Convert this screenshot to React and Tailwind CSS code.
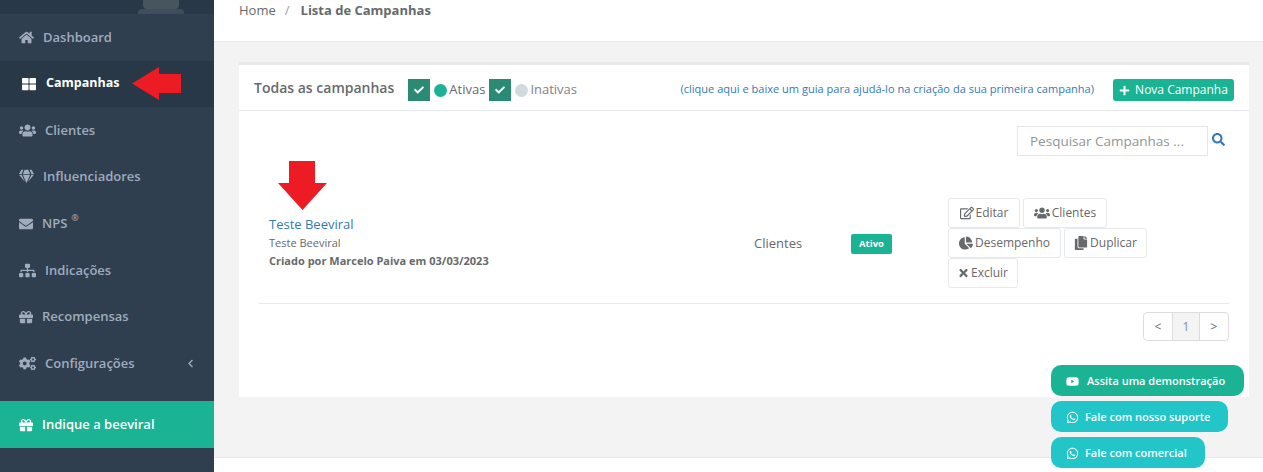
import React from "react";
import {
  FaHome, FaThLarge, FaUsers, FaGem, FaEnvelope, FaSitemap, FaGift, FaCogs, FaChevronLeft,
  FaCheck, FaPlus, FaSearch, FaRegEdit, FaChartPie, FaCopy, FaTimes, FaYoutube, FaWhatsapp,
} from "react-icons/fa";

const navItems = [
  { label: "Dashboard", icon: FaHome, size: "w-[15px] h-[15px]", row: "pt-[1px] gap-[9px]" },
  { label: "Campanhas", icon: FaThLarge, active: true, size: "w-[14px] h-[14px] ml-[3px]", row: "bg-[#293846] text-white font-bold text-[12.5px] gap-[10px]" },
  { label: "Clientes", icon: FaUsers, size: "w-[17px] h-[15px]", row: "pt-[1px] gap-[9px]" },
  { label: "Influenciadores", icon: FaGem, size: "w-[15px] h-[15px]", row: "gap-[9px]" },
  { label: "NPS", icon: FaEnvelope, sup: true, size: "w-[14px] h-[14px]", row: "pt-[1px] gap-[9px]" },
  { label: "Indicações", icon: FaSitemap, size: "w-[17px] h-[15px]", row: "pt-[1px] gap-[9px]" },
  { label: "Recompensas", icon: FaGift, size: "w-[14px] h-[14px]", row: "pt-[1px] gap-[9px]" },
  { label: "Configurações", icon: FaCogs, caret: true, size: "w-[17px] h-[15px]", row: "pt-[1px] gap-[9px]" },
];

function LeftArrow() {
  return (
    <svg viewBox="0 0 49 33" className="w-[49px] h-[33px] ml-[3px] shrink-0" fill="#ed1c24">
      <path d="M0 16.5 27 0v7h22v19H27v7z" />
    </svg>
  );
}

function DownArrow() {
  return (
    <svg viewBox="0 0 49 49" className="absolute left-[19px] -top-[21px] w-[49px] h-[49px]" fill="#ed1c24">
      <path d="M11 0h26v22h12L24.5 49 0 22h11z" />
    </svg>
  );
}

function Sidebar() {
  return (
    <aside className="w-[214px] shrink-0 bg-[#2f3f4f] flex flex-col font-semibold text-[13px] text-[#a0abbd]">
      <div className="h-[14px] bg-[#293846] flex justify-center overflow-hidden pl-[107px]">
        <div className="w-[50px] h-[14px] flex flex-col items-center">
          <div className="w-[36px] h-[9px] bg-[#47555f] rounded-b" />
          <div className="w-[46px] h-[5px] bg-[#3f4e5a] rounded-t" />
        </div>
      </div>
      {navItems.map((item) => {
        const Icon = item.icon;
        return (
          <div key={item.label} className={`h-[46.5px] pl-[19px] pr-[20px] flex items-center ${item.row}`}>
            <Icon className={`${item.size} shrink-0`} />
            <span>{item.label}</span>
            {item.sup && <sup className="text-[9px] -ml-[5px] -mt-[3px]">®</sup>}
            {item.caret && <FaChevronLeft className="ml-auto w-[7px] h-[9px]" />}
            {item.active && <LeftArrow />}
          </div>
        );
      })}
      <div className="mt-[15px] h-[47px] bg-[#1ab394] text-white pl-[19px] flex items-center gap-[9px]">
        <FaGift className="w-[14px] h-[14px]" />
        <span>Indique a beeviral</span>
      </div>
    </aside>
  );
}

function CheckBox() {
  return (
    <span className="w-[22px] h-[22px] bg-[#2b8a74] flex items-center justify-center text-white">
      <FaCheck className="w-[10px] h-[10px]" />
    </span>
  );
}

function ActionButton({ icon: Icon, children, width, iconSize = "w-[14px] h-[14px]" }) {
  return (
    <button className={`h-[30px] ${width} border border-[#e7eaec] rounded-[3px] bg-white flex items-center justify-center gap-[2px] text-[12px] text-[#676a6c]`}>
      <Icon className={iconSize} />
      {children}
    </button>
  );
}

function FloatButton({ icon: Icon, children, color, width, gap }) {
  return (
    <div className={`h-[31px] ${width} ${color} ${gap} rounded-[10px] pl-[15px] pt-[1px] flex items-center text-white text-[11px] font-semibold`}>
      <Icon className="w-[13px] h-[13px]" />
      {children}
    </div>
  );
}

export default function App() {
  return (
    <div className="relative w-[1263px] h-[472px] overflow-hidden flex font-['Open_Sans',sans-serif] text-[#676a6c]">
      <Sidebar />

      <main className="flex-1 flex flex-col bg-[#f3f3f4]">
        <header className="h-[42px] shrink-0 bg-white border-b border-[#e7eaec] pl-[25px] pt-[1px] text-[13px] flex gap-[8px]">
          <span>Home</span>
          <span className="text-[#9a9c9e] ml-[1px]">/</span>
          <span className="font-bold ml-[3px]">Lista de Campanhas</span>
        </header>

        <section className="ml-[25px] mr-[14px] mt-[20px] h-[335px] bg-white border-t-[3px] border-[#e7eaec] flex flex-col">
          <div className="h-[46px] shrink-0 border-b border-[#e7eaec] pl-[15px] pr-[15px] flex items-center">
            <h2 className="text-[14px] font-semibold -mt-[1px]">Todas as campanhas</h2>
            <div className="ml-[14px] flex items-center text-[13px] mt-[5px]">
              <CheckBox />
              <span className="ml-[4px] w-[13px] h-[13px] rounded-full bg-[#1ab394]" />
              <span className="ml-[2px]">Ativas</span>
              <span className="ml-[4px]"><CheckBox /></span>
              <span className="ml-[4px] w-[13px] h-[13px] rounded-full bg-[#d1dade]" />
              <span className="ml-[2px] text-[#7f8285]">Inativas</span>
            </div>
            <a className="ml-auto mt-[4px] text-[11.05px] text-[#337ab7] mr-[19px]">(clique aqui e baixe um guia para ajudá-lo na criação da sua primeira campanha)</a>
            <button className="w-[121px] h-[22px] mt-[5px] rounded-[3px] bg-[#1ab394] text-white text-[12px] font-medium flex items-center justify-center gap-[5px]">
              <FaPlus className="w-[11px] h-[11px]" />
              Nova Campanha
            </button>
          </div>

          <div className="flex justify-end items-start pt-[15px] pr-[24px] gap-[4px]">
            <div className="w-[191px] h-[30px] border border-[#e5e6e7] flex items-center pl-[12px] text-[13.5px] text-[#8f9599]">Pesquisar Campanhas ...</div>
            <FaSearch className="mt-[7px] w-[13px] h-[13px] text-[#337ab7]" />
          </div>

          <div className="relative mx-[20px] mt-[26px] h-[122px] border-b border-[#e7eaec] flex">
            <DownArrow />
            <div className="w-[495px] pl-[10px] pt-[33px]">
              <a className="block text-[13px] text-[#337ab7] leading-[18px]">Teste Beeviral</a>
              <p className="text-[11px] leading-[14px] mt-[3px]">Teste Beeviral</p>
              <p className="text-[11px] leading-[14px] mt-[4px] font-bold">Criado por Marcelo Paiva em 03/03/2023</p>
            </div>
            <div className="w-[97px] pt-[52px] text-[13px] leading-[18px]">Clientes</div>
            <div className="w-[97px] pt-[52px]">
              <span className="w-[41px] h-[20px] rounded-[2px] bg-[#1ab394] text-white text-[9.5px] font-bold flex items-center justify-center">Ativo</span>
            </div>
            <div className="w-[210px] pt-[16px] flex flex-wrap gap-x-[3px] content-start">
              <ActionButton icon={FaRegEdit} width="w-[72px]">Editar</ActionButton>
              <ActionButton icon={FaUsers} width="w-[84px]" iconSize="w-[16px] h-[14px]">Clientes</ActionButton>
              <ActionButton icon={FaChartPie} width="w-[113px]">Desempenho</ActionButton>
              <ActionButton icon={FaCopy} width="w-[83px]">Duplicar</ActionButton>
              <ActionButton icon={FaTimes} width="w-[70px]" iconSize="w-[11px] h-[12px]">Excluir</ActionButton>
            </div>
          </div>

          <div className="flex justify-end pt-[8px] pr-[20px]">
            <div className="h-[29px] flex border border-[#ddd] rounded-[4px] text-[12px] text-[#676a6c]">
              <span className="w-[28px] flex items-center justify-center">&lt;</span>
              <span className="w-[28px] flex items-center justify-center bg-[#f4f4f4] border-x border-[#ddd] text-[#7d8da0]">1</span>
              <span className="w-[28px] flex items-center justify-center">&gt;</span>
            </div>
          </div>
        </section>

        <footer className="mt-auto h-[15px] bg-white border-t border-[#e7eaec]" />
      </main>

      <div className="absolute left-[1051px] top-[365px] flex flex-col gap-[5px]">
        <FloatButton icon={FaYoutube} color="bg-[#1ab394]" width="w-[193px]" gap="gap-[8px]">Assita uma demonstração</FloatButton>
        <FloatButton icon={FaWhatsapp} color="bg-[#23c6c8]" width="w-[177px]" gap="gap-[6px]">Fale com nosso suporte</FloatButton>
        <FloatButton icon={FaWhatsapp} color="bg-[#23c6c8]" width="w-[154px]" gap="gap-[6px]">Fale com comercial</FloatButton>
      </div>
    </div>
  );
}
